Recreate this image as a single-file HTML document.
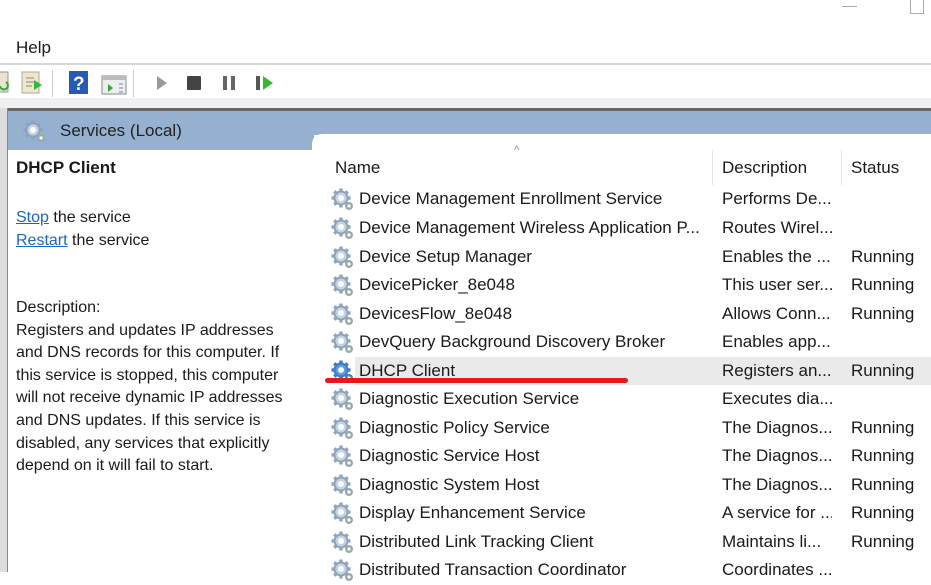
<!DOCTYPE html>
<html><head><meta charset="utf-8"><style>
*{margin:0;padding:0;box-sizing:border-box}
body{width:931px;height:572px;overflow:hidden;background:#fff;font-family:"Liberation Sans",sans-serif;color:#1a1a1a;position:relative}
.a{position:absolute;white-space:nowrap}
.row{position:absolute;left:312px;width:619px;height:28.6px;font-size:17px}
.row span{position:absolute;top:4px;white-space:nowrap;overflow:hidden}
.n{left:47px;width:350px}
.d{left:410px;width:110px}
.s{left:539px}
.row svg{position:absolute;left:19px;top:3px}
.lt{font-size:16px;line-height:22.6px}
a{color:#1a66c2;text-decoration:underline}
</style></head><body>
<svg width="0" height="0" style="position:absolute"><defs>
<g id="g"><circle cx="10" cy="10" r="7.5" fill="#8da4bc"/><g fill="#8da4bc"><rect x="8.3" y="0.5" width="3.4" height="19"/><rect x="0.5" y="8.3" width="19" height="3.4"/><rect x="8.3" y="0.5" width="3.4" height="19" transform="rotate(45 10 10)"/><rect x="8.3" y="0.5" width="3.4" height="19" transform="rotate(-45 10 10)"/></g><circle cx="10" cy="10" r="5.5" fill="#c5d3e2"/><circle cx="10" cy="10" r="3" fill="#fff"/><circle cx="18" cy="18" r="4" fill="#9aa"/><circle cx="18" cy="18" r="1.6" fill="#fff"/></g>
<g id="gb"><circle cx="10" cy="10" r="7.5" fill="#3a7cc7"/><g fill="#3a7cc7"><rect x="8.3" y="0.5" width="3.4" height="19"/><rect x="0.5" y="8.3" width="19" height="3.4"/><rect x="8.3" y="0.5" width="3.4" height="19" transform="rotate(45 10 10)"/><rect x="8.3" y="0.5" width="3.4" height="19" transform="rotate(-45 10 10)"/></g><circle cx="10" cy="10" r="5.5" fill="#5b9be0"/><circle cx="10" cy="10" r="3" fill="#fff"/><circle cx="18" cy="18" r="4" fill="#4b7fb8"/><circle cx="18" cy="18" r="1.6" fill="#fff"/></g>
</defs></svg>
<div class="a" style="left:842px;top:6px;width:15px;height:1px;background:#aaa"></div>
<div class="a" style="left:910px;top:0;width:14px;height:14px;border:1px solid #aaa;border-top:none"></div>
<div class="a" style="left:16px;top:38px;font-size:17px">Help</div>
<div class="a" style="left:0;top:63px;width:931px;height:2px;background:#d8d8d8"></div>
<!-- toolbar -->
<svg class="a" style="left:0;top:68px" width="300" height="30">
<rect x="-4" y="4" width="12" height="20" fill="#e8e4d0" stroke="#999"/><path d="M0 18 a4 4 0 1 0 6 -4" stroke="#3a3" stroke-width="2" fill="none"/>
<rect x="22" y="4" width="17" height="21" fill="#efe8c8" stroke="#aaa"/><path d="M26 10h8M26 14h8M26 18h6" stroke="#888"/><path d="M34 12l8 5-8 5z" fill="#3b3"/>
<rect x="52" y="2" width="1" height="27" fill="#ccc"/>
<rect x="69" y="3" width="19" height="23" fill="#2858b8"/><text x="73" y="22" font-size="19" font-weight="bold" fill="#fff" font-family="Liberation Sans">?</text>
<rect x="102" y="8" width="24" height="18" fill="#eee" stroke="#888"/><rect x="102" y="8" width="24" height="4" fill="#bbb"/><path d="M108 16l5 4-5 4z" fill="#3a3"/><path d="M119 16h4M119 20h4M119 24h4" stroke="#68a"/>
<rect x="133" y="2" width="1" height="27" fill="#ccc"/>
<path d="M157 8l10 7-10 7z" fill="#999"/>
<rect x="187" y="8" width="14" height="14" rx="1" fill="#444"/>
<rect x="223" y="8" width="4" height="14" fill="#666"/><rect x="231" y="8" width="4" height="14" fill="#666"/>
<rect x="256" y="8" width="4" height="14" fill="#555"/><path d="M263 8l10 7-10 7z" fill="#3b3"/>
</svg>
<div class="a" style="left:0;top:98px;width:931px;height:10px;background:#f0f0f0"></div>
<div class="a" style="left:0;top:108px;width:931px;height:3px;background:#666"></div>
<div class="a" style="left:0;top:108px;width:8px;height:464px;background:#ddd;border-right:1px solid #888"></div>
<div class="a" style="left:8px;top:111px;width:923px;height:24px;background:#95b1cf"></div>
<div class="a" style="left:8px;top:134px;width:306px;height:16px;background:#95b1cf"></div>
<div class="a" style="left:312px;top:134px;width:619px;height:40px;background:#fff;border-top-left-radius:10px"></div>
<svg class="a" style="left:23px;top:120px" width="22" height="22"><use href="#g"/></svg>
<div class="a" style="left:60px;top:121px;font-size:17px;color:#222">Services (Local)</div>
<div class="a" style="left:16px;top:158px;font-size:17px;font-weight:bold">DHCP Client</div>
<div class="a lt" style="left:16px;top:207px"><a>Stop</a> the service<br><a>Restart</a> the service</div>
<div class="a lt" style="left:16px;top:297px">Description:<br>Registers and updates IP addresses<br>and DNS records for this computer. If<br>this service is stopped, this computer<br>will not receive dynamic IP addresses<br>and DNS updates. If this service is<br>disabled, any services that explicitly<br>depend on it will fail to start.</div>
<!-- header -->
<div class="a" style="left:514px;top:143px;font-size:12px;color:#999">^</div>
<div class="a" style="left:335px;top:158px;font-size:17px">Name</div>
<div class="a" style="left:712px;top:150px;width:1px;height:35px;background:#e5e5e5"></div>
<div class="a" style="left:722px;top:158px;font-size:17px">Description</div>
<div class="a" style="left:841px;top:150px;width:1px;height:35px;background:#e5e5e5"></div>
<div class="a" style="left:851px;top:158px;font-size:17px">Status</div>
<div class="a" style="left:355px;top:357px;width:576px;height:28px;background:#eaeaea"></div>
<div class="row" style="top:185px"><svg width="24" height="24"><use href="#g"/></svg><span class="n">Device Management Enrollment Service</span><span class="d">Performs De...</span><span class="s"></span></div>
<div class="row" style="top:214px"><svg width="24" height="24"><use href="#g"/></svg><span class="n">Device Management Wireless Application P...</span><span class="d">Routes Wirel...</span><span class="s"></span></div>
<div class="row" style="top:243px"><svg width="24" height="24"><use href="#g"/></svg><span class="n">Device Setup Manager</span><span class="d">Enables the ...</span><span class="s">Running</span></div>
<div class="row" style="top:271px"><svg width="24" height="24"><use href="#g"/></svg><span class="n">DevicePicker_8e048</span><span class="d">This user ser...</span><span class="s">Running</span></div>
<div class="row" style="top:300px"><svg width="24" height="24"><use href="#g"/></svg><span class="n">DevicesFlow_8e048</span><span class="d">Allows Conn...</span><span class="s">Running</span></div>
<div class="row" style="top:328px"><svg width="24" height="24"><use href="#g"/></svg><span class="n">DevQuery Background Discovery Broker</span><span class="d">Enables app...</span><span class="s"></span></div>
<div class="row" style="top:357px"><svg width="24" height="24"><use href="#gb"/></svg><span class="n">DHCP Client</span><span class="d">Registers an...</span><span class="s">Running</span></div>
<div class="row" style="top:385px"><svg width="24" height="24"><use href="#g"/></svg><span class="n">Diagnostic Execution Service</span><span class="d">Executes dia...</span><span class="s"></span></div>
<div class="row" style="top:414px"><svg width="24" height="24"><use href="#g"/></svg><span class="n">Diagnostic Policy Service</span><span class="d">The Diagnos...</span><span class="s">Running</span></div>
<div class="row" style="top:442px"><svg width="24" height="24"><use href="#g"/></svg><span class="n">Diagnostic Service Host</span><span class="d">The Diagnos...</span><span class="s">Running</span></div>
<div class="row" style="top:471px"><svg width="24" height="24"><use href="#g"/></svg><span class="n">Diagnostic System Host</span><span class="d">The Diagnos...</span><span class="s">Running</span></div>
<div class="row" style="top:499px"><svg width="24" height="24"><use href="#g"/></svg><span class="n">Display Enhancement Service</span><span class="d">A service for ...</span><span class="s">Running</span></div>
<div class="row" style="top:528px"><svg width="24" height="24"><use href="#g"/></svg><span class="n">Distributed Link Tracking Client</span><span class="d">Maintains li...</span><span class="s">Running</span></div>
<div class="row" style="top:556px"><svg width="24" height="24"><use href="#g"/></svg><span class="n">Distributed Transaction Coordinator</span><span class="d">Coordinates ...</span><span class="s"></span></div>
<div class="a" style="left:325px;top:378px;width:303px;height:5px;border-radius:3px;background:#e21a1a"></div>
</body></html>
